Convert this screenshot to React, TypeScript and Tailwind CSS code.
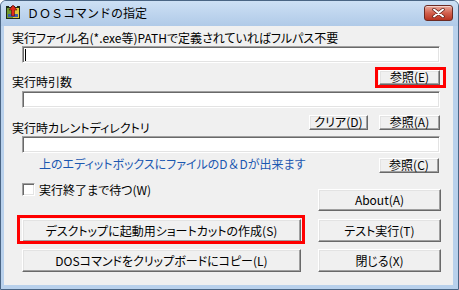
const btn =
  "flex items-center justify-center bg-[#f0f0f0] border border-t-white border-l-white border-r-[#696969] border-b-[#696969] shadow-[inset_-1px_-1px_0_#a0a0a0,inset_1px_1px_0_#e3e3e3] text-black whitespace-nowrap leading-[12px]";

const edit =
  "bg-white border border-t-[#a0a0a0] border-l-[#a0a0a0] border-r-white border-b-white shadow-[inset_1px_1px_0_#696969,inset_-1px_-1px_0_#e3e3e3]";

function AppIcon() {
  return (
    <svg width="16" height="16" viewBox="0 0 16 16">
      <path d="M1 2h3v1h2V2h4v1h2V2h3v13H1z" fill="#1f2a14" />
      <rect x="2" y="4" width="12" height="10" fill="#6f9a2e" />
      <rect x="8" y="4" width="6" height="10" fill="#e2c93a" />
      <rect x="3" y="10" width="10" height="3" fill="#3d5fa8" />
      <path d="M8 1l4 5H9.5v6h-3V6H4z" fill="#e02a1c" stroke="#5a0a06" strokeWidth="0.6" />
    </svg>
  );
}

function CloseButton() {
  return (
    <div className="w-[29px] h-[16px] rounded-[3px] border border-[#6b2a22] bg-gradient-to-b from-[#e9a99b] via-[#d2604d] to-[#b8321f] flex items-center justify-center shadow-[inset_0_1px_0_rgba(255,255,255,0.5)]">
      <svg width="13" height="10" viewBox="0 0 13 10">
        <path d="M2 1.5l9 7M11 1.5l-9 7" stroke="#5b1d15" strokeWidth="3.4" strokeLinecap="round" />
        <path d="M2 1.5l9 7M11 1.5l-9 7" stroke="#ffffff" strokeWidth="2" strokeLinecap="round" />
      </svg>
    </div>
  );
}

export default function App() {
  return (
    <div className="w-[459px] h-[290px] flex flex-col bg-[#b9d1ec] border border-[#4a6584] rounded-t-[6px] overflow-hidden font-['Noto_Sans_CJK_JP',sans-serif] [font-feature-settings:'palt'] text-[12px] leading-[14px] text-black">
      {/* Title bar */}
      <div className="h-[25px] flex items-start pl-[4px] pr-[5px] pt-[3px] bg-gradient-to-b from-[#cde0f4] to-[#b0cae8]">
        <AppIcon />
        <span className="ml-[6px] mt-[2px] [font-feature-settings:normal]">ＤＯＳコマンドの指定</span>
        <div className="ml-auto mt-[1px]">
          <CloseButton />
        </div>
      </div>

      {/* Client area */}
      <div className="relative flex-1 ml-[3px] mr-[5px] mb-[4px] bg-[#f0f0f0] flex flex-col">
        <div className="mt-[5px] ml-[8px] h-[14px]">
          実行ファイル名(*.exe等)PATHで定義されていればフルパス不要
        </div>
        <div className={`${edit} mt-[1px] ml-[18px] w-[418px] h-[17px] relative`}>
          <span className="absolute left-[2px] top-[2px] w-px h-[12px] bg-black" />
        </div>

        <div className="h-[28px] flex items-start">
          <span className="ml-[8px] mt-[12px]">実行時引数</span>
          <div className={`${btn} ml-auto mr-[13px] mt-[7px] w-[61px] h-[15px] pb-px`}>参照(E)</div>
        </div>
        <div className={`${edit} ml-[18px] w-[418px] h-[17px]`} />

        <div className="h-[28px] flex items-start">
          <span className="ml-[8px] mt-[13px]">実行時カレントディレクトリ</span>
          <div className={`${btn} ml-auto mt-[7px] w-[59px] h-[15px] pb-px`}>クリア(D)</div>
          <div className={`${btn} ml-[11px] mr-[13px] mt-[7px] w-[61px] h-[15px] pb-px`}>参照(A)</div>
        </div>
        <div className={`${edit} ml-[18px] w-[418px] h-[17px]`} />

        <div className="h-[20px] flex items-start">
          <span className="ml-[35px] mt-[4px] text-[#1c58b0]">
            上のエディットボックスにファイルの
            <span className="[font-feature-settings:normal]">D＆D</span>
            が出来ます
          </span>
          <div className={`${btn} ml-auto mr-[14px] mt-[5px] w-[60px] h-[15px] pb-px`}>参照(C)</div>
        </div>

        <div className="flex">
          <div className="ml-[18px] w-[279px] flex flex-col">
            <div className="mt-[10px] h-[13px] flex items-center">
              <span className={`${edit} w-[13px] h-[13px]`} />
              <span className="ml-[4px]">実行終了まで待つ(W)</span>
            </div>
            <div className={`${btn} mt-[23px] h-[23px]`}>デスクトップに起動用ショートカットの作成(S)</div>
            <div className={`${btn} mt-[7px] h-[23px]`}>DOSコマンドをクリップボードにコピー(L)</div>
          </div>
          <div className="ml-[17px] w-[123px] flex flex-col">
            <div className={`${btn} mt-[16px] h-[22px]`}>About(A)</div>
            <div className={`${btn} mt-[8px] h-[23px]`}>テスト実行(T)</div>
            <div className={`${btn} mt-[7px] h-[23px]`}>閉じる(X)</div>
          </div>
        </div>

        {/* Red highlight annotations */}
        <div className="absolute left-[371px] top-[41px] w-[71px] h-[21px] border-[3px] border-[#ff0000]" />
        <div className="absolute left-[13px] top-[189px] w-[288px] h-[29px] border-[3px] border-[#ff0000]" />
      </div>
    </div>
  );
}
